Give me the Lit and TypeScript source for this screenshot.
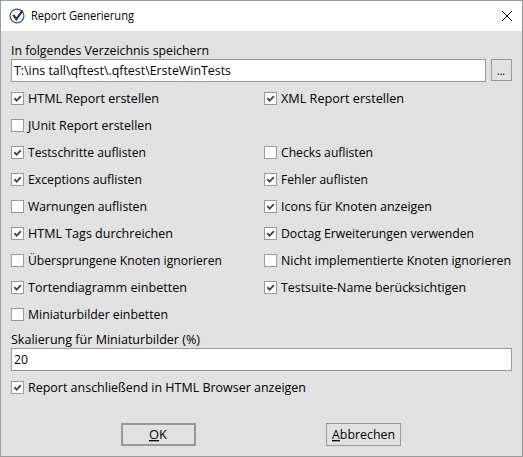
import { LitElement, html, css, nothing } from 'lit';

type Option = { text: string; width: number; checked: boolean } | null;

const option = (text: string, width: number, checked = false): Option => ({ text, width, checked });

const OPTIONS: Option[] = [
  option('HTML Report erstellen', 131, true), option('XML Report erstellen', 123, true),
  option('JUnit Report erstellen', 124), null,
  option('Testschritte auflisten', 118, true), option('Checks auflisten', 92),
  option('Exceptions auflisten', 114, true), option('Fehler auflisten', 87, true),
  option('Warnungen auflisten', 119), option('Icons für Knoten anzeigen', 151, true),
  option('HTML Tags durchreichen', 145, true), option('Doctag Erweiterungen verwenden', 193, true),
  option('Übersprungene Knoten ignorieren', 194), option('Nicht implementierte Knoten ignorieren', 230),
  option('Tortendiagramm einbetten', 159, true), option('Testsuite-Name berücksichtigen', 185, true),
  option('Miniaturbilder einbetten', 140), null,
];

// One line of UI text set to an exact advance width; the key letter, if any, is underlined.
const line = (text: string, width: number, key = '') => html`
  <svg class="line" width=${width + 1} height="17">
    <text y="13" textLength=${width} lengthAdjust="spacingAndGlyphs"><tspan class="key">${key}</tspan>${text}</text>
  </svg>`;

const checkbox = (o: Option) => o === null ? html`<span></span>` : html`
  <label class="option">
    <span class="box">${o.checked ? html`
      <svg width="11" height="11"><path class="tick" d="M2.3 5.2 4.6 7.6 8.9 3.2"/></svg>` : nothing}</span>
    ${line(o.text, o.width)}
  </label>`;

class AppRoot extends LitElement {
  static styles = css`
    :host { display: block; }
    svg { display: block; flex: none; }
    .window { box-sizing: border-box; width: 523px; height: 457px; border: 1px solid #9b9b9b; background: #e1e1e1; color: #000; font-family: "Open Sans", "Noto Sans", sans-serif; font-size: 13.3px; }
    .title { box-sizing: border-box; height: 30px; background: #fff; display: flex; align-items: center; padding: 0 9px 1px 8px; }
    .title .line { margin-left: 5px; font-size: 12.3px; }
    .title .close { margin-left: auto; }
    .line { overflow: visible; fill: #000; }
    .content { padding: 11px 10px 0; }
    .path { display: flex; gap: 5px; align-items: flex-start; }
    .field { box-sizing: border-box; height: 23px; border: 1px solid #999; background: #fff; flex: 1; padding: 2px 0 0 2px; }
    .browse { box-sizing: border-box; width: 21px; height: 22px; border: 1px solid #999; display: flex; justify-content: center; padding-top: 2px; }
    .options { display: grid; grid-template-columns: 253px 1fr; grid-auto-rows: 27px; padding: 3px 0; }
    .option { display: flex; align-items: center; gap: 4px; height: 27px; }
    .box { box-sizing: border-box; width: 13px; height: 13px; border: 1px solid #999; background: #fff; flex: none; }
    .tick { fill: none; stroke: #444; stroke-width: 1.9; }
    .after { padding-top: 3px; }
    .buttons { display: flex; gap: 130px; padding: 22px 0 0 110px; }
    .button { box-sizing: border-box; width: 75px; height: 23px; border: 1px solid #999; display: flex; align-items: center; justify-content: center; }
    .default { border-width: 2px; }
    .key { text-decoration: underline; }
  `;

  render() {
    return html`
      <div class="window">
        <div class="title">
          <svg width="17" height="16" viewBox="0 0 17 16">
            <circle cx="8" cy="8" r="6.9" fill="#fff" stroke="#3a568c" stroke-width="1.3"/>
            <path d="M4.2 6.8 7.3 11.2 13.6 2.6" fill="none" stroke="#1d3566" stroke-width="2.2"/>
          </svg>
          ${line('Report Generierung', 103)}
          <svg class="close" width="12" height="12"><path d="M1 1 11 11M11 1 1 11" stroke="#000" fill="none"/></svg>
        </div>
        <div class="content">
          ${line('In folgendes Verzeichnis speichern', 198)}
          <div class="path">
            <div class="field">${line('T:\\ins tall\\qftest\\.qftest\\ErsteWinTests', 217)}</div>
            <div class="browse">${line('...', 8)}</div>
          </div>
          <div class="options">${OPTIONS.map(checkbox)}</div>
          ${line('Skalierung für Miniaturbilder (%)', 189)}
          <div class="field">${line('20', 14)}</div>
          <div class="after">${checkbox(option('Report anschließend in HTML Browser anzeigen', 278, true))}</div>
          <div class="buttons">
            <div class="button default">${line('K', 18, 'O')}</div>
            <div class="button">${line('bbrechen', 63, 'A')}</div>
          </div>
        </div>
      </div>`;
  }
}
customElements.define('app-root', AppRoot);
